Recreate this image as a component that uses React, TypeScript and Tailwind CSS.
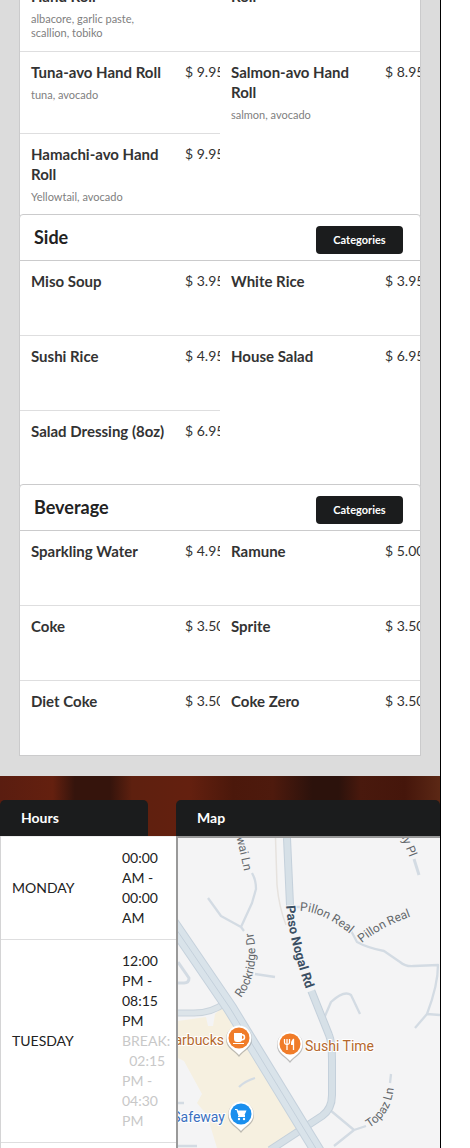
import React from 'react'

interface MenuItem {
    name: string
    price: string
    description?: string
}

interface MenuSection {
    title?: string
    items: MenuItem[]
}

const sections: MenuSection[] = [
    {
        items: [
            { name: 'Hand Roll', price: '', description: 'albacore, garlic paste, scallion, tobiko' },
            { name: 'Roll', price: '' },
            { name: 'Tuna-avo Hand Roll', price: '9.95', description: 'tuna, avocado' },
            { name: 'Salmon-avo Hand Roll', price: '8.95', description: 'salmon, avocado' },
            { name: 'Hamachi-avo Hand Roll', price: '9.95', description: 'Yellowtail, avocado' },
        ],
    },
    {
        title: 'Side',
        items: [
            { name: 'Miso Soup', price: '3.95' },
            { name: 'White Rice', price: '3.95' },
            { name: 'Sushi Rice', price: '4.95' },
            { name: 'House Salad', price: '6.95' },
            { name: 'Salad Dressing (8oz)', price: '6.95' },
        ],
    },
    {
        title: 'Beverage',
        items: [
            { name: 'Sparkling Water', price: '4.95' },
            { name: 'Ramune', price: '5.00' },
            { name: 'Coke', price: '3.50' },
            { name: 'Sprite', price: '3.50' },
            { name: 'Diet Coke', price: '3.50' },
            { name: 'Coke Zero', price: '3.50' },
        ],
    },
]

const MenuCell = ({ item, border }: { item: MenuItem; border: string }) => (
    <div className={`flex overflow-hidden pt-[10px] pb-[11px] pl-[11px] ${border}`}>
        <div className="min-h-[53px] min-w-0 flex-1 pr-3">
            <h3 className="text-[15px] leading-5 font-bold text-[#333]">{item.name}</h3>
            {item.description && (
                <p className="mt-[6px] max-w-[120px] text-[11px] leading-[14px] text-[#808080]">{item.description}</p>
            )}
        </div>
        <span className="w-[35px] shrink-0 overflow-hidden text-[14px] leading-5 whitespace-nowrap text-[#333]">
            {item.price && `$ ${item.price}`}
        </span>
    </div>
)

const Section = ({ section }: { section: MenuSection }) => {
    const count = section.items.length
    const lastRow = Math.floor((count - 1) / 2)

    // the line is only drawn above another item of the same column
    const borderFor = (i: number) => {
        if (Math.floor(i / 2) === lastRow) return ''
        return i + 2 < count ? 'border-b border-[#dededf]' : 'border-b border-transparent'
    }

    return (
        <section>
            {section.title && (
                <div className="-mx-px -mt-px flex items-start justify-between rounded-t border border-[#cbcbcc] bg-white pt-[11px] pr-[17px] pb-[6px] pl-[14px]">
                    <h2 className="text-[18px] leading-[22px] font-bold text-[#222]">{section.title}</h2>
                    <button className="h-7 w-[87px] rounded bg-[#1b1c1d] text-[11px] leading-7 font-bold text-white">
                        Categories
                    </button>
                </div>
            )}
            <div className="grid grid-cols-2">
                {section.items.map((item, i) => (
                    <MenuCell key={i} item={item} border={borderFor(i)} />
                ))}
            </div>
        </section>
    )
}

const Hours = () => (
    <div className="w-[176px] shrink-0">
        <h2 className="mr-7 rounded-t-[5px] bg-[#1b1c1d] pl-[21px] text-[14px] leading-9 font-bold text-white">Hours</h2>
        <table className="w-full table-fixed border-separate border-spacing-0 border-l border-[#d4d4d5] bg-white text-[14px] leading-5 text-[#222]">
            <tbody>
                <tr>
                    <th scope="row" className="w-[110px] border-t border-[#eee] pl-[11px] text-left font-normal">MONDAY</th>
                    <td className="border-t border-[#eee] py-[11px] pr-[12px] pl-[11px]">00:00 AM - 00:00 AM</td>
                </tr>
                <tr>
                    <th scope="row" className="border-t border-[#dededf] pl-[11px] text-left font-normal">TUESDAY</th>
                    <td className="border-t border-[#dededf] py-[11px] pr-[12px] pl-[11px]">
                        12:00 PM - 08:15 PM
                        <div className="text-[#c8c8c8]">
                            BREAK:<br />&nbsp;&nbsp;02:15 PM - 04:30 PM
                        </div>
                    </td>
                </tr>
                <tr>
                    <td colSpan={2} className="h-20 border-t border-[#dededf]"></td>
                </tr>
            </tbody>
        </table>
    </div>
)

const Pin = ({ x, y, color, children }: { x: number; y: number; color: string; children: React.ReactNode }) => (
    <g transform={`translate(${x} ${y})`}>
        <path d="M0 17C-4 11-13 9-13-1A13 13 0 0 1 13-1C13 9 4 11 0 17Z" fill="#777" opacity=".45" transform="translate(0 1)" />
        <path d="M0 16C-4 11-12.500 8-12.500-1A12.500 12.500 0 0 1 12.500-1C12.500 8 4 11 0 16Z" fill="#fff" />
        <circle cy="-1" r="10.500" fill={color} />
        {children}
    </g>
)

const StreetMap = () => (
    <svg viewBox="178 838 262 310" preserveAspectRatio="xMinYMin slice" className="block w-full bg-[#f4f4f5]" fontFamily="Roboto, sans-serif">
        {/* commercial area */}
        <path d="M178 1021L206 1017L208 1026L213 1026L215 1014L225 1004L297 1130L270 1148H217L207 1115L197 1103L202 1094L184 1061L178 1058Z" fill="#f6f0e0" />

        {/* small streets */}
        <g fill="none" stroke="#d3dbe3" strokeWidth="2.300" strokeLinejoin="round">
            <path d="M208 898L221 916L241 927L252 903L256 889Q256 880 252 873M241 927L244 931" />
            <path d="M349 927L357 942Q368 948 384 951L400 962Q406 967 414 966L438 965Q438 985 427 1014L415 1028M427 1014L440 1015" />
            <path d="M325 1016L331 1002Q344 990 351 995L360 1014" />
            <path d="M255 974L275 977M391 1074L390 1083" />
            <path d="M330 1110L354 1130L366 1126M354 1130L334 1146" />
            <path d="M239 1087Q245 1081 255 1078M178 1103H184M178 1146H197M296 907H301" />
            <path d="M178 962L189 978Q189 983 184 983H178" strokeWidth="3" />
            <path d="M414 859L419 875" strokeWidth="3" />
        </g>
        <path d="M275.500 838L277 885Q279 907 286 925" fill="none" stroke="#e6e2de" strokeWidth="1.500" />

        {/* main roads */}
        <g fill="none" strokeLinejoin="round">
            <path d="M287 838L290 905L301 965L329 1035Q332 1042 332 1060V1095Q332 1109 322 1116L270 1150" stroke="#c4d0db" strokeWidth="8" />
            <path d="M287 838L290 905L301 965L329 1035Q332 1042 332 1060V1095Q332 1109 322 1116L270 1150" stroke="#d6e0e7" strokeWidth="6" />
            <path d="M176 1013H194Q212 1013 225 1003" stroke="#c9d3dc" strokeWidth="7" />
            <path d="M176 1013H194Q212 1013 225 1003" stroke="#dce4e9" strokeWidth="5" />
            <path d="M170 920L230 1008L320 1155" stroke="#c5d1dc" strokeWidth="14" />
            <path d="M170 920L230 1008L320 1155" stroke="#d9e3ea" strokeWidth="12" />
            <path d="M170 920L230 1008L320 1155" stroke="#c4d0db" strokeWidth="1" />
            {/* the street is hidden behind its own name */}
            <path d="M290 906L301 965L311 991" stroke="#f4f4f5" strokeWidth="10" />
        </g>

        <defs>
            <path id="uwai" d="M235 831Q240 852 247 885" />
            <path id="paso" d="M286 906Q289 943 310 1000" />
            <path id="pillon1" d="M300 911Q325 911 358 941" />
            <path id="pillon2" d="M362 943Q380 927 418 914" />
            <path id="rockridge" d="M241 998Q264 968 250 920" />
            <path id="topaz" d="M369 1128Q396 1112 394 1075" />
            <path id="place" d="M400 834L414 868" />
        </defs>
        <g fontSize="12" fill="#63676b" stroke="#f4f4f5" strokeWidth="2" paintOrder="stroke">
            <text><textPath href="#uwai">uwai Ln</textPath></text>
            <text><textPath href="#pillon1">Pillon Real</textPath></text>
            <text><textPath href="#pillon2">Pillon Real</textPath></text>
            <text><textPath href="#rockridge">Rockridge Dr</textPath></text>
            <text><textPath href="#topaz">Topaz Ln</textPath></text>
            <text><textPath href="#place">sy Pl</textPath></text>
            <text fontSize="13" fontWeight="700" fill="#3b4f63"><textPath href="#paso">Paso Nogal Rd</textPath></text>
        </g>

        <g fontSize="14" stroke="#fff" strokeWidth="2" paintOrder="stroke">
            <text x="224" y="1045" textAnchor="end" fill="#b5682d">Starbucks</text>
            <text x="305" y="1051" fill="#b5682d">Sushi Time</text>
            <text x="225" y="1122" textAnchor="end" fill="#3a6fc0">Safeway</text>
        </g>
        <Pin x={239} y={1039} color="#f07c29">
            <path d="M-5-6H3V-5A3 3 0 0 1 3 1.500Q2 3 0 3H-2Q-5 3-5 0ZM3-3.500V0A1.500 1.500 0 0 0 3-3.500ZM-6 4H5V5H-6Z" fill="#fff" fillRule="evenodd" />
        </Pin>
        <Pin x={290} y={1045} color="#f07c29">
            <path d="M-5.500-6V-3Q-5.500-.5-3-.5M-.5-6V-3Q-.5-.5-3-.5M-3-6V5M3.500 5V-6" stroke="#fff" strokeWidth="1.300" fill="none" />
            <path d="M4-6.500Q.5-5 1 0H4Z" fill="#fff" />
        </Pin>
        <Pin x={241} y={1115} color="#1a8fee">
            <path d="M-6-5.500H-4L-2 .5H4" stroke="#fff" strokeWidth="1.200" fill="none" />
            <path d="M-4-4.500H5.500L3.500 0H-2ZM-3 1H4V2H-3Z" fill="#fff" />
            <circle cx="-2" cy="4" r="1.200" fill="#fff" />
            <circle cx="3" cy="4" r="1.200" fill="#fff" />
        </Pin>
    </svg>
)

const App = () => {
    return (
        <div className="h-screen overflow-hidden bg-white font-['Lato',sans-serif]">
            <div className="mr-[29px] min-h-screen border-r border-black">
                <main className="overflow-hidden bg-[#dcdcdc] px-[19px] pb-5">
                    <div className="-mt-6 border border-t-0 border-[#cbcbcc] bg-white">
                        {sections.map((section, i) => (
                            <Section key={i} section={section} />
                        ))}
                    </div>
                </main>
                <footer className="flex bg-[linear-gradient(90deg,#5a1d10_0%,#64200f_12%,#35140c_17%,#35140c_25%,#5e200f_30%,#64200f_43%,#4b180b_53%,#4e1a0d_62%,#2c120c_71%,#2c120c_77%,#49190d_82%,#45160b_92%,#5c2815_100%)] pt-6">
                    <Hours />
                    <div className="min-w-0 flex-1">
                        <h2 className="rounded-t-[5px] bg-[#1b1c1d] pl-[21px] text-[14px] leading-9 font-bold text-white">Map</h2>
                        <div className="border-t-2 border-l-2 border-[#999]">
                            <StreetMap />
                        </div>
                    </div>
                </footer>
            </div>
        </div>
    )
}

export default App
